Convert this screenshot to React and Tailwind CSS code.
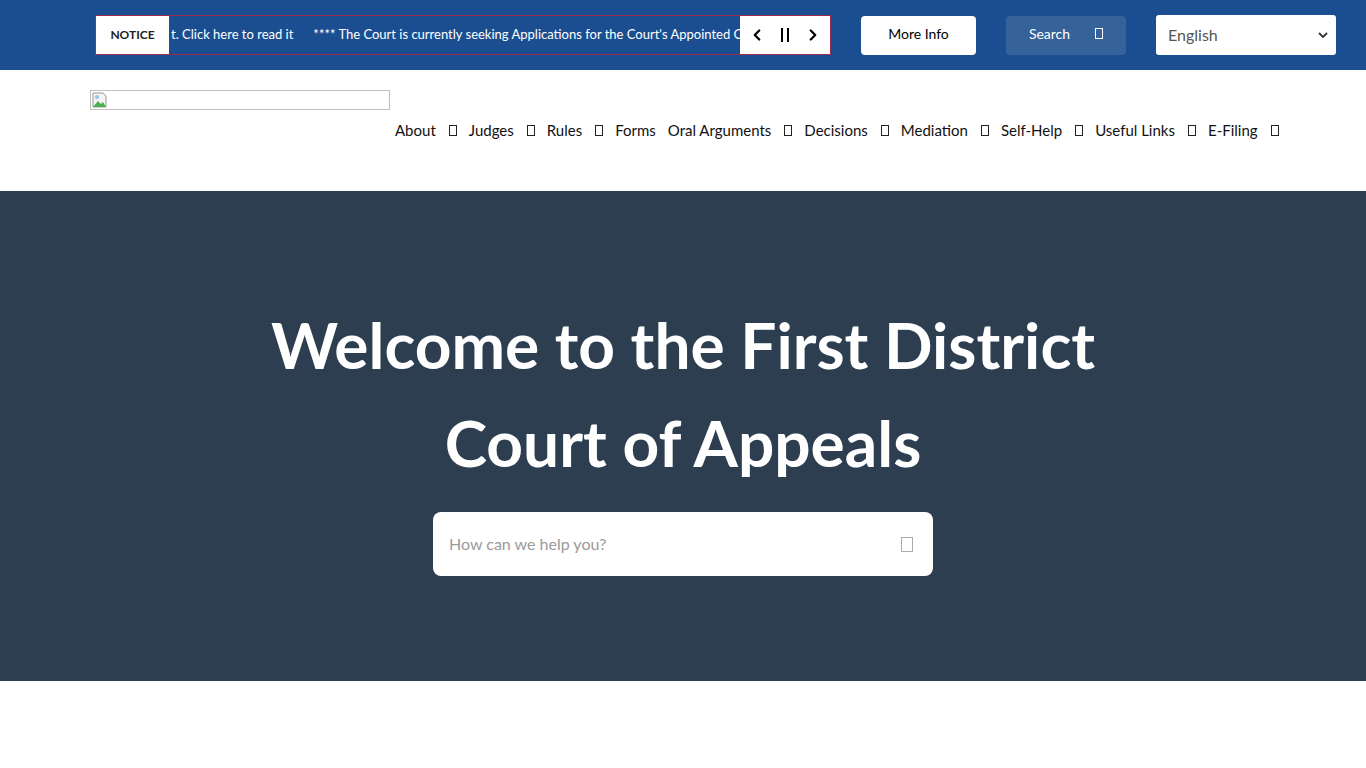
import { ChevronLeft, ChevronRight } from 'lucide-react';

const font = { fontFamily: 'Lato, "Open Sans", sans-serif' };

function Tofu({ className = '' }) {
  return <span className={`inline-block w-[8px] h-[11px] border border-current ${className}`} />;
}

const navItems = [
  ['About', true],
  ['Judges', true],
  ['Rules', true],
  ['Forms', false],
  ['Oral Arguments', true],
  ['Decisions', true],
  ['Mediation', true],
  ['Self-Help', true],
  ['Useful Links', true],
  ['E-Filing', true],
];

export default function App() {
  return (
    <div className="w-[1366px] min-h-[768px] bg-white font-['Lato',sans-serif]" style={font}>
      {/* top bar */}
      <div className="h-[70px] bg-[#1b4e90] flex items-center pl-[95px]">
        <div className="w-[736px] h-[40px] border border-[#9b2d4f] flex items-stretch overflow-hidden">
          <div className="w-[73px] bg-white flex items-center justify-center text-[12px] font-bold text-[#222]">NOTICE</div>
          <div className="flex-1 overflow-hidden flex items-center">
            <span className="whitespace-nowrap text-[13px] text-white pl-[2px]">
              t. Click here to read it<span className="inline-block w-[20px]" />**** The Court is currently seeking Applications for the Court's Appointed C
            </span>
          </div>
          <div className="w-[90px] bg-white flex items-center justify-between px-[8px] text-black">
            <ChevronLeft size={18} strokeWidth={3} />
            <span className="flex gap-[4px]"><span className="w-[2px] h-[14px] bg-black" /><span className="w-[2px] h-[14px] bg-black" /></span>
            <ChevronRight size={18} strokeWidth={3} />
          </div>
        </div>
        <button className="ml-[30px] w-[115px] h-[39px] pb-[3px] bg-white rounded-[4px] text-[14px] text-black">More Info</button>
        <button className="ml-[30px] w-[120px] h-[39px] pb-[3px] bg-[#346299] rounded-[4px] text-[14px] text-white flex items-center justify-center gap-[25px]">
          Search <Tofu className="text-white" />
        </button>
        <div className="ml-[30px] w-[180px] h-[40px] bg-white rounded-[3px] flex items-center justify-between pl-[12px] pr-[8px]">
          <span className="text-[16px] text-[#555]">English</span>
          <svg width="10" height="7" viewBox="0 0 10 7"><path d="M1 1l4 4 4-4" stroke="#333" strokeWidth="1.8" fill="none" /></svg>
        </div>
      </div>

      {/* header */}
      <div className="h-[121px] flex pl-[90px]">
        <div className="mt-[20px] w-[300px] h-[20px] border border-[#c0c0c0] relative">
          <svg className="absolute left-[1px] top-[1px]" width="16" height="16" viewBox="0 0 16 16">
            <path d="M1 1h10l3 3v11H1z" fill="#f3f3f3" stroke="#999" strokeWidth="1" />
            <path d="M1 15l5-6 3 3 2-2 3 5z" fill="#4caf50" />
            <circle cx="5" cy="5" r="2" fill="#8fc4e8" />
          </svg>
        </div>
        <nav className="mt-[50px] ml-[5px] flex items-center h-[20px] text-[15px] text-[#111]">
          {navItems.map(([label, arrow]) => (
            <span key={label} className="flex items-center mr-[12px]">
              {label}
              {arrow && <Tofu className="ml-[13px] text-[#222]" />}
            </span>
          ))}
        </nav>
      </div>

      {/* hero */}
      <div className="h-[490px] bg-[#2c3e50] flex flex-col items-center pt-[105px]">
        <h1 className="text-white font-bold text-[64px] leading-[98px] text-center w-[900px]">
          Welcome to the First District Court of Appeals
        </h1>
        <div className="mt-[20px] w-[500px] h-[64px] bg-white rounded-[8px] flex items-center justify-between pl-[16px] pr-[20px]">
          <span className="text-[16px] text-[#9a9a9a]">How can we help you?</span>
          <span className="inline-block w-[12px] h-[15px] border border-[#aaa]" />
        </div>
      </div>
    </div>
  );
}
